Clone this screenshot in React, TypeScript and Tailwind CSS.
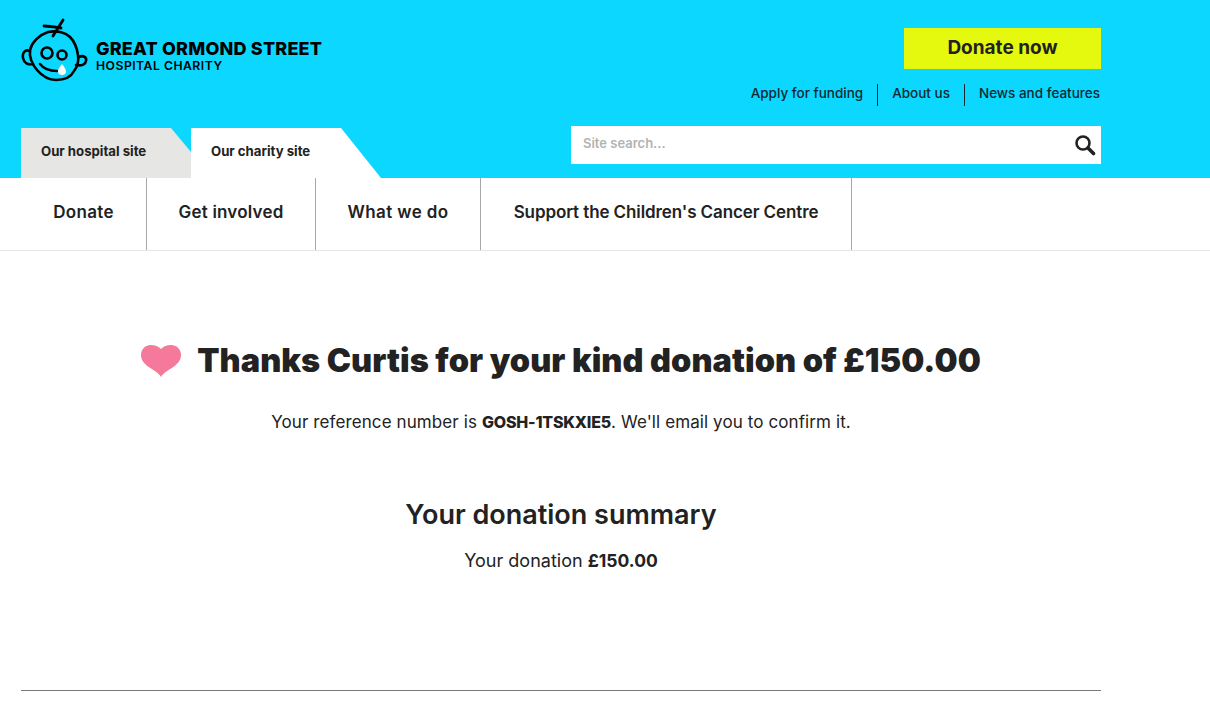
import React from "react";

const navItems = [
  { label: "Donate", cls: "w-[126px] tracking-[0.3px]" },
  { label: "Get involved", cls: "w-[169px] tracking-[0.2px]" },
  { label: "What we do", cls: "w-[165px] tracking-[0.4px]" },
  { label: "Support the Children's Cancer Centre", cls: "w-[371px] tracking-[-0.1px]" },
];
const topLinks = ["Apply for funding", "About us", "News and features"];

function Logo() {
  return (
    <svg width="68" height="66" viewBox="0 0 68 66" fill="none" stroke="#000" strokeWidth="2.6" strokeLinecap="round" strokeLinejoin="round" className="shrink-0">
      <path d="M27 15 C18 18 11 25 9 33 C8 41 11 47 16 53 C22 60 29 63 35 63 C43 63 50 60 53 54 C57 49 58 44 57 38 C56 31 54 25 49 20 C45 16 37 13 27 15 Z" />
      <path d="M9 34 C4 32 1 36 2 41 C3 46 7 48 12 47" />
      <path d="M58 40 C62 38 66 40 65 44 C64 48 60 49 55 48" />
      <path d="M23 9 C28 9 34 10 40 11 M32 19 C35 14 39 8 42 3" strokeWidth="2.8" />
      <circle cx="26" cy="36" r="5.500" />
      <circle cx="41" cy="38" r="4.500" />
      <path d="M19 47 C22 51 28 54 36 54" />
      <path d="M41 47 C38.500 50 37 52.500 37 54.500 C37 57 39 58 41 58 C43 58 45 57 45 54.500 C45 52.500 43.500 50 41 47 Z" fill="#fff" stroke="none" />
    </svg>
  );
}

function Heart() {
  return (
    <svg width="40" height="32" viewBox="0 0 40 32" className="shrink-0">
      <path d="M20 32 C18 28 12 25 7 21.500 C2.500 18 0 14.500 0 10 C0 4 4.500 0 10 0 C14 0 17.500 1.500 20 4 C22.500 1.500 26 0 30 0 C35.500 0 40 4 40 10 C40 14.500 37.500 18 33 21.500 C28 25 22 28 20 32 Z" fill="#f4799a" />
    </svg>
  );
}

function SearchIcon() {
  return (
    <svg width="22" height="22" viewBox="0 0 22 22" fill="none" stroke="#222222" strokeLinecap="round">
      <circle cx="9" cy="9" r="6.500" strokeWidth="2.600" />
      <path d="M14 14 L19.500 19.500" strokeWidth="3.600" />
    </svg>
  );
}

export default function App() {
  return (
    <div className="min-h-[726px] bg-white text-[#222222] font-['Inter','Liberation_Sans',sans-serif]">
      <header className="h-[178px] bg-[#0cd7ff] px-[21px]">
        <div className="flex h-full w-[1080px] justify-between">
          <div className="flex w-[360px] flex-col justify-between">
            <div className="mt-[17px] flex items-center gap-[7px]">
              <Logo />
              <div className="mt-[12px] text-black">
                <div className="text-[18px] leading-[20px] font-extrabold tracking-[0.2px] whitespace-nowrap">GREAT ORMOND STREET</div>
                <div className="text-[12.200px] leading-[14px] font-semibold tracking-[0.5px] whitespace-nowrap">HOSPITAL CHARITY</div>
              </div>
            </div>
            <div className="flex h-[50px] items-stretch">
              <div className="flex w-[170px] items-center bg-[#e6e6e4] pb-[3px] pl-[20px] text-[13.200px] font-bold [clip-path:polygon(0_0,150px_0,170px_24px,170px_100%,0_100%)]">
                Our hospital site
              </div>
              <div className="flex w-[190px] items-center bg-white pb-[3px] pl-[20px] text-[13.200px] font-bold [clip-path:polygon(0_0,150px_0,190px_100%,0_100%)]">
                Our charity site
              </div>
            </div>
          </div>
          <div className="flex w-[530px] flex-col items-end">
            <a className="mt-[28px] flex h-[41px] w-[197px] items-center justify-center bg-[#e4f90e] text-[19px] font-bold">Donate now</a>
            <div className="mt-[15px] flex h-[22px] items-stretch pr-[1px] text-[13.500px] font-medium text-[#0f2a33]">
              {topLinks.map((link, i) => (
                <span
                  key={link}
                  className={
                    i === 0
                      ? "flex items-center pr-[14px] pb-[4px]"
                      : i === 1
                        ? "flex items-center border-l border-[#0f2a33] px-[14px] pb-[4px]"
                        : "flex items-center border-l border-[#0f2a33] pl-[14px] pb-[4px]"
                  }
                >
                  {link}
                </span>
              ))}
            </div>
            <div className="mt-[20px] flex h-[38px] w-[530px] items-center justify-between bg-white pr-[5px] pl-[12px]">
              <span className="pb-[2px] text-[13px] font-semibold text-[#b3b3b3]">Site search...</span>
              <SearchIcon />
            </div>
          </div>
        </div>
      </header>

      <nav className="flex h-[73px] border-b border-[#e6e6e6] pl-[21px]">
        {navItems.map((item) => (
          <a key={item.label} className={"flex h-[72px] items-center justify-center border-r border-[#a8a8a8] pb-[2px] text-[17px] font-semibold whitespace-nowrap " + item.cls}>
            {item.label}
          </a>
        ))}
      </nav>

      <main className="w-[1122px] pt-[91px] text-center">
        <div className="flex items-center justify-center gap-[16px]">
          <Heart />
          <h1 className="text-[32.500px] leading-[38px] font-black tracking-[0.04px] whitespace-nowrap">Thanks Curtis for your kind donation of £150.00</h1>
        </div>
        <p className="mt-[30px] text-[17px] leading-[24px] tracking-[0.1px]">
          Your reference number is <strong className="text-[16px] font-extrabold tracking-[-0.2px]">GOSH-1TSKXIE5</strong>. We'll email you to confirm it.
        </p>
        <h2 className="mt-[64px] text-[27px] leading-[34px] font-semibold">Your donation summary</h2>
        <p className="mt-[17px] text-[18px] leading-[24px]">
          Your donation <strong className="text-[17.500px] font-bold">£150.00</strong>
        </p>
      </main>

      <div className="mx-[21px] mt-[117px] h-px w-[1080px] bg-[#777777]" />
    </div>
  );
}
